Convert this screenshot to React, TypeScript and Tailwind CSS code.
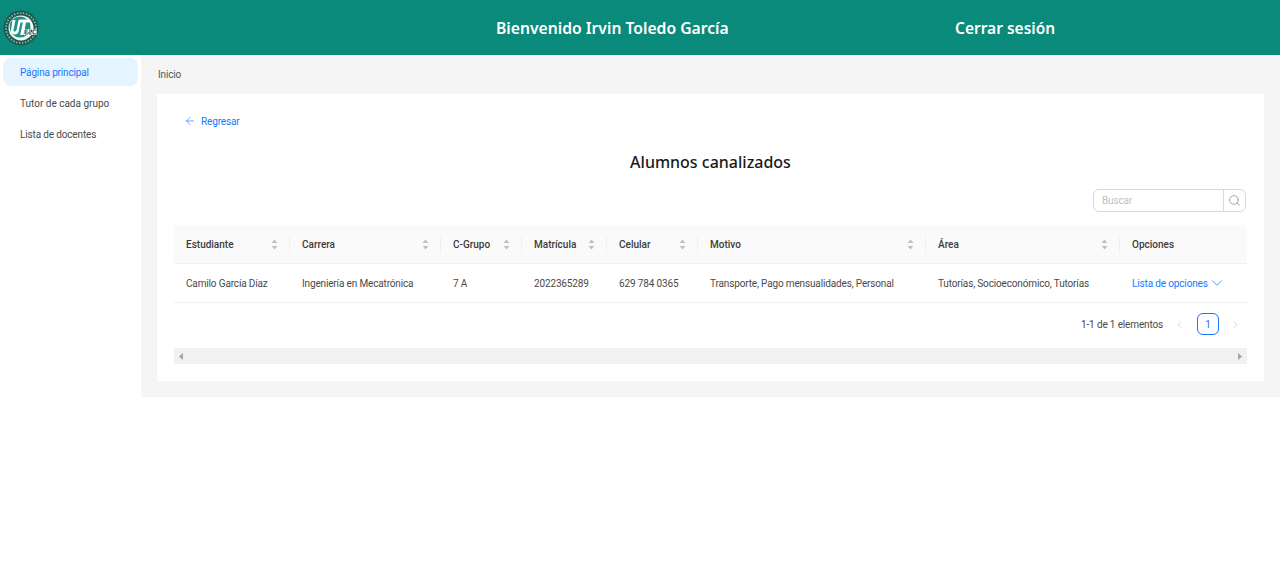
import { ArrowLeft, ChevronDown, ChevronLeft, ChevronRight, Search } from 'lucide-react';

const columns = [
  { label: 'Estudiante', sort: true },
  { label: 'Carrera', sort: true },
  { label: 'C-Grupo', sort: true },
  { label: 'Matrícula', sort: true },
  { label: 'Celular', sort: true },
  { label: 'Motivo', sort: true },
  { label: 'Área', sort: true },
  { label: 'Opciones', sort: false },
];

const row = [
  'Camilo García Díaz',
  'Ingeniería en Mecatrónica',
  '7 A',
  '2022365289',
  '629 784 0365',
  'Transporte, Pago mensualidades, Personal',
  'Tutorías, Socioeconómico, Tutorías',
];

function SortIcon() {
  return (
    <svg width="7" height="11" viewBox="0 0 7 11" className="text-[#bfbfbf]" fill="currentColor">
      <path d="M3.5 0.5 L6.5 4 L0.5 4 Z" />
      <path d="M3.5 10.5 L6.5 7 L0.5 7 Z" />
    </svg>
  );
}

function Logo() {
  return (
    <svg width="36" height="36" viewBox="0 0 36 36">
      <circle cx="18" cy="18" r="17.5" fill="#1d5a50" />
      <circle cx="18" cy="18" r="15" fill="none" stroke="#8fb9af" strokeWidth="1.6" strokeDasharray="1.5 1.5" />
      <circle cx="18" cy="18" r="12.5" fill="#f1f8f6" />
      <circle cx="17" cy="17" r="10.5" fill="#1c9383" />
      <path d="M9.5 10 L12.5 10 L10.5 20 C10.2 22 12.5 22 13.5 20 L15.5 10 L18 10 L15.5 22 C14 25.5 8 25.5 7.8 21.5 Z" fill="#ffffff" />
      <path d="M16.5 9.5 L27 9.5 L26.2 12.5 L23 12.5 L20.5 25 L17.2 25 L19.8 12.5 L16 12.5 Z" fill="#ffffff" />
      <rect x="21" y="19" width="12.5" height="6" fill="#f1f8f6" />
      <path d="M22 20 H25 M22 22 H24.5 M22 24 H25 M22 20 V24 M26 20 H28.5 V22 H26 V24 H28.5 M33 20 H30 V24 H33" stroke="#1d3f39" strokeWidth="0.9" fill="none" />
    </svg>
  );
}

export default function App() {
  return (
    <div className="min-h-[584px] bg-white font-['Roboto','Noto_Sans',sans-serif] text-[10px] tracking-[-0.15px] text-[#4a4a4a]">
      <header className="flex h-[55px] items-center bg-[#0a8a7a] font-['Noto_Sans',sans-serif] tracking-normal text-white">
        <div className="flex w-[496px] pl-[3px]">
          <Logo />
        </div>
        <div className="w-[459px] pt-[2px] text-[15.7px] font-semibold">Bienvenido Irvin Toledo García</div>
        <div className="pt-[2px] text-[15.5px] font-semibold">Cerrar sesión</div>
      </header>

      <div className="flex items-start">
        <aside className="w-[141px] shrink-0 px-[3px] pt-[3px]">
          <div className="flex h-[28px] items-center rounded-lg bg-[#e6f4ff] pl-[17px] text-[#1677ff]">Página principal</div>
          <div className="mt-[3px] flex h-[28px] items-center pl-[17px] tracking-normal">Tutor de cada grupo</div>
          <div className="mt-[3px] flex h-[28px] items-center pl-[17px]">Lista de docentes</div>
        </aside>

        <main className="h-[342px] flex-1 bg-[#f5f5f5] pl-4 pr-4">
          <div className="flex h-[39px] items-center pl-[1px] text-[#555555]">Inicio</div>
          <section className="h-[287px] bg-white px-[17px] pt-[19px]">
            <div className="flex h-[16px] items-center gap-[5px] pl-[10px] text-[#1677ff]">
              <ArrowLeft size={12} strokeWidth={1.3} />
              <span>Regresar</span>
            </div>
            <h1 className="mt-[22px] text-center font-['Noto_Sans',sans-serif] text-[16px] font-medium leading-[22px] tracking-normal text-[#1a1a1a]">Alumnos canalizados</h1>

            <div className="mt-[16px] flex justify-end pr-[1px]">
              <div className="flex h-[23px] w-[153px] items-stretch rounded-md border border-[#d9d9d9]">
                <div className="flex flex-1 items-center pl-[8px] text-[#bfbfbf]">Buscar</div>
                <div className="flex w-[22px] items-center justify-center border-l border-[#d9d9d9] pb-[1px] text-[#8c8c8c]">
                  <Search size={13} strokeWidth={1.4} />
                </div>
              </div>
            </div>

            <div className="mt-[13px] grid grid-cols-[116px_151px_81px_85px_91px_228px_194px_127px]">
              {columns.map((col, i) => (
                <div key={col.label} className="relative flex h-[39px] items-center justify-between border-b border-[#f0f0f0] bg-[#fafafa] px-[12px] font-medium tracking-normal text-[#3a3a3a]">
                  <span>{col.label}</span>
                  {col.sort ? <SortIcon /> : null}
                  {i < columns.length - 1 ? <span className="absolute right-0 top-[11px] h-[17px] w-px bg-[#f0f0f0]" /> : null}
                </div>
              ))}
              {row.map((cell) => (
                <div key={cell} className="flex h-[39px] items-center whitespace-nowrap border-b border-[#f0f0f0] pl-[12px]">{cell}</div>
              ))}
              <div className="flex h-[39px] items-center whitespace-nowrap border-b border-[#f0f0f0] pl-[12px] text-[#1677ff]">
                <span>Lista de opciones</span>
                <ChevronDown size={18} strokeWidth={1} />
              </div>
            </div>

            <div className="mt-[10px] flex h-[22px] items-center justify-end">
              <span>1-1 de 1 elementos</span>
              <ChevronLeft size={11} strokeWidth={1.4} className="ml-[11px] text-[#bfbfbf]" />
              <div className="ml-[12px] flex h-[22px] w-[22px] items-center justify-center rounded-md border border-[#1677ff] text-[#1677ff]">1</div>
              <ChevronRight size={11} strokeWidth={1.4} className="ml-[11px] mr-[6px] text-[#bfbfbf]" />
            </div>

            <div className="mt-[13px] flex h-[16px] items-center justify-between bg-[#f1f1f1] px-[5px] text-[#a3a3a3]">
              <svg width="4" height="7" viewBox="0 0 4 7" fill="currentColor"><path d="M4 0 L0 3.5 L4 7 Z" /></svg>
              <svg width="4" height="7" viewBox="0 0 4 7" fill="currentColor"><path d="M0 0 L4 3.5 L0 7 Z" /></svg>
            </div>
          </section>
        </main>
      </div>
    </div>
  );
}
